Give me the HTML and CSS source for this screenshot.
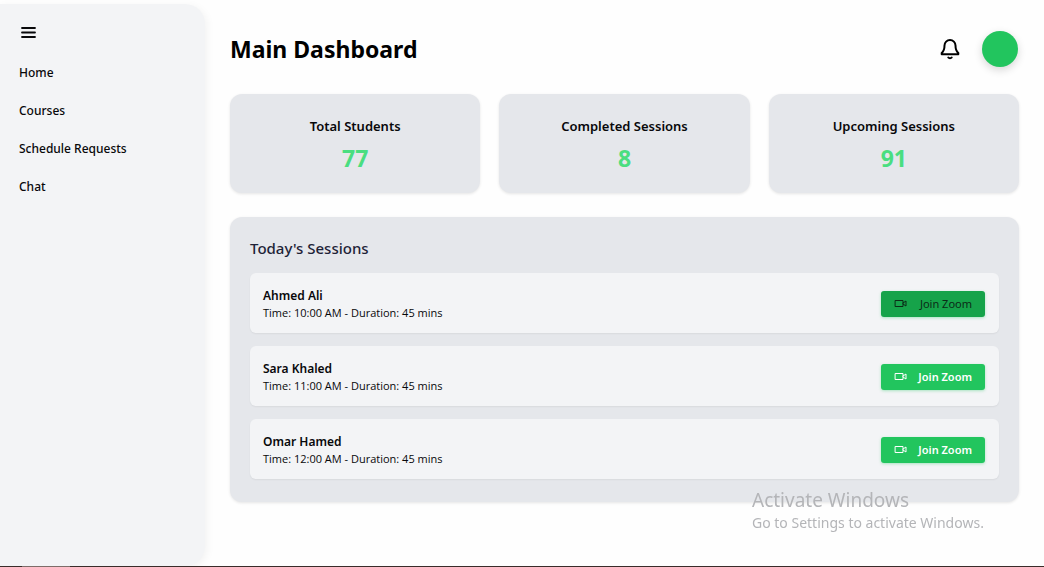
FILE: index.html
```html
<!DOCTYPE html>
<html lang="en">
<head>
<meta charset="utf-8">
<meta name="viewport" content="width=device-width, initial-scale=1">
<title>Main Dashboard</title>
<link rel="stylesheet" href="styles.css">
</head>
<body>
<div class="app">
  <aside class="sidebar">
    <button class="menu-button" type="button" aria-label="Toggle menu">
      <svg class="menu-icon" viewBox="0 0 19 19" aria-hidden="true"><path d="M3 5h13M3 9.500h13M3 14h13"/></svg>
    </button>
    <nav class="nav">
      <a class="nav-link" href="#">Home</a>
      <a class="nav-link" href="#">Courses</a>
      <a class="nav-link" href="#">Schedule Requests</a>
      <a class="nav-link" href="#">Chat</a>
    </nav>
  </aside>
  <main class="main">
    <header class="header">
      <h1 class="title">Main Dashboard</h1>
      <div class="actions">
        <button class="bell-button" type="button" aria-label="Notifications">
          <svg class="bell-icon" viewBox="0 0 22 22" aria-hidden="true"><path d="M5.500 7.500a5.500 5.500 0 0 1 11 0c0 4 .8 5.800 2.800 7.500v1.300H2.700V15C4.700 13.300 5.500 11.500 5.500 7.500M9.300 19.500a1.900 1.300 0 0 0 3.400 0"/></svg>
        </button>
        <button class="avatar" type="button" aria-label="Profile"></button>
      </div>
    </header>
    <section class="stats">
      <div class="stat"><h2 class="stat-label">Total Students</h2><p class="stat-value">77</p></div>
      <div class="stat"><h2 class="stat-label">Completed Sessions</h2><p class="stat-value">8</p></div>
      <div class="stat"><h2 class="stat-label">Upcoming Sessions</h2><p class="stat-value">91</p></div>
    </section>
    <section class="panel">
      <h2 class="panel-title">Today's Sessions</h2>
      <ul class="sessions">
        <li class="session">
          <div><h3 class="session-name">Ahmed Ali</h3><p class="session-time">Time: 10:00 AM - Duration: 45 mins</p></div>
          <button class="join join-active" type="button"><svg class="join-icon" viewBox="0 0 13 13" aria-hidden="true"><path d="M1.500 3.500h7.500v6h-7.500zM9 6l3-2v5l-3-2"/></svg>Join Zoom</button>
        </li>
        <li class="session">
          <div><h3 class="session-name">Sara Khaled</h3><p class="session-time">Time: 11:00 AM - Duration: 45 mins</p></div>
          <button class="join" type="button"><svg class="join-icon" viewBox="0 0 13 13" aria-hidden="true"><path d="M1.500 3.500h7.500v6h-7.500zM9 6l3-2v5l-3-2"/></svg>Join Zoom</button>
        </li>
        <li class="session">
          <div><h3 class="session-name">Omar Hamed</h3><p class="session-time">Time: 12:00 AM - Duration: 45 mins</p></div>
          <button class="join" type="button"><svg class="join-icon" viewBox="0 0 13 13" aria-hidden="true"><path d="M1.500 3.500h7.500v6h-7.500zM9 6l3-2v5l-3-2"/></svg>Join Zoom</button>
        </li>
      </ul>
    </section>
  </main>
</div>
<div class="taskbar"><span class="taskbar-item"></span></div>
<div class="watermark">
  <p class="watermark-title">Activate Windows</p>
  <p class="watermark-text">Go to Settings to activate Windows.</p>
</div>
</body>
</html>
```
FILE: styles.css
```css
* { box-sizing: border-box; }
h1, h2, h3, p, ul { margin: 0; padding: 0; }
body {
  margin: 0;
  min-height: 100vh;
  display: flex;
  flex-direction: column;
  background: #fefefe;
  color: #08080a;
  font-family: "Segoe UI", "Noto Sans", "Open Sans", sans-serif;
}
button { border: 0; padding: 0; background: none; font: inherit; color: inherit; cursor: pointer; }
svg { display: block; fill: none; stroke: currentColor; stroke-linecap: round; stroke-linejoin: round; }

.app { flex: 1; display: flex; padding-top: 4px; }
.sidebar {
  flex: 0 0 205px;
  padding: 19px;
  background: #f3f4f6;
  border-radius: 0 20px 20px 0;
  box-shadow: 2px 2px 8px rgba(0, 0, 0, 0.05);
}
.menu-button { display: block; }
.menu-icon { width: 19px; height: 19px; stroke-width: 1.8; }
.nav { display: flex; flex-direction: column; align-items: flex-start; gap: 18px; margin-top: 21px; }
.nav-link { color: inherit; text-decoration: none; font-size: 12px; line-height: 20px; font-weight: 500; }

.main { flex: 1; min-width: 0; padding: 26px 25px; }
.header { display: flex; justify-content: space-between; align-items: center; margin-bottom: 26px; }
.title { font-size: 23px; line-height: 38px; font-weight: 700; color: #000; }
.actions { display: flex; align-items: center; gap: 21px; padding-right: 1px; }
.bell-icon { width: 22px; height: 22px; stroke-width: 2; color: #000; }
.avatar { width: 36px; height: 36px; border-radius: 50%; background: #22c55e; box-shadow: 0 3px 8px rgba(0, 0, 0, 0.16); }

.stats { display: grid; grid-template-columns: repeat(3, 1fr); gap: 19px; margin-bottom: 24px; }
.stat { padding: 21px 19px 20px; text-align: center; background: #e5e7eb; border-radius: 12px; box-shadow: 0 1px 3px rgba(0, 0, 0, 0.1); }
.stat-label { font-size: 13px; line-height: 22px; font-weight: 600; }
.stat-value { margin-top: 7px; font-size: 23px; line-height: 29px; font-weight: 700; color: #4ade80; }

.panel { padding: 20px 20px 23px; background: #e5e7eb; border-radius: 12px; box-shadow: 0 1px 3px rgba(0, 0, 0, 0.1); }
.panel-title { margin-bottom: 14px; font-size: 15px; line-height: 22px; font-weight: 500; color: #1e2337; }
.sessions { display: flex; flex-direction: column; gap: 13px; list-style: none; }
.session {
  display: flex;
  justify-content: space-between;
  align-items: center;
  padding: 13px 14px 12px 13px;
  background: #f3f4f6;
  border-radius: 6px;
  box-shadow: 0 1px 2px rgba(0, 0, 0, 0.06);
}
.session-name { font-size: 12px; line-height: 19px; font-weight: 600; }
.session-time { font-family: "Segoe UI", "Open Sans", sans-serif; font-size: 11px; line-height: 16px; }
.join {
  display: flex;
  align-items: center;
  justify-content: space-between;
  width: 104px;
  padding: 4px 13px;
  border-radius: 3px;
  background: #22c55e;
  color: #fff;
  font-size: 11px;
  line-height: 18px;
  font-weight: 600;
  box-shadow: 0 1px 3px rgba(34, 197, 94, 0.35);
}
.join-active { background: #16a34a; color: #0b2b17; font-weight: 400; }
.join-icon { width: 13px; height: 13px; stroke-width: 1; }

.taskbar { height: 1px; padding-left: 22px; background: #3a2c2a; }
.taskbar-item { display: block; width: 48px; height: 1px; background: #7d6c69; }
.watermark { position: fixed; right: 56px; bottom: 34px; min-width: 236px; color: #b4b5b8; pointer-events: none; }
.watermark-title { font-size: 19px; line-height: 24px; }
.watermark-text { font-size: 14px; line-height: 21px; }
```
